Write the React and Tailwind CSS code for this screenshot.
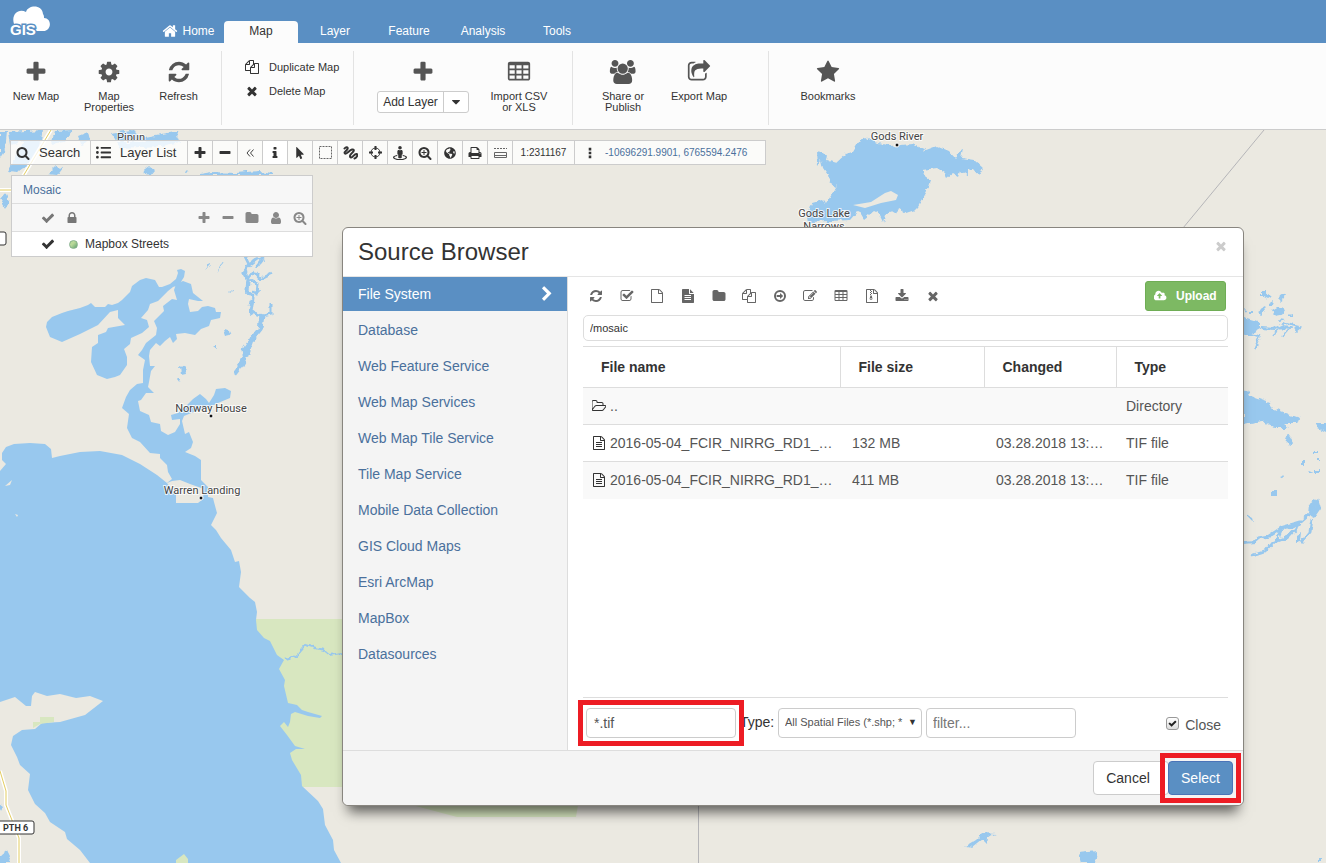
import { FaGlobeAmericas, FaMousePointer, FaStreetView, FaListUl } from "react-icons/fa";

// Icon outlines, drawn on a 1792 unit grid
const ICONS = {
  plus: "M1600 736v192q0 40-28 68t-68 28h-416v416q0 40-28 68t-68 28h-192q-40 0-68-28t-28-68v-416h-416q-40 0-68-28t-28-68v-192q0-40 28-68t68-28h416v-416q0-40 28-68t68-28h192q40 0 68 28t28 68v416h416q40 0 68 28t28 68z",
  minus: "M1600 736v192q0 40-28 68t-68 28h-1216q-40 0-68-28t-28-68v-192q0-40 28-68t68-28h1216q40 0 68 28t28 68z",
  cog: "M1152 896q0-106-75-181t-181-75-181 75-75 181 75 181 181 75 181-75 75-181zm512-109v222q0 12-8 23t-20 13l-185 28q-19 54-39 91 35 50 107 138 10 12 10 25t-9 23q-27 37-99 108t-94 71q-12 0-26-9l-138-108q-44 23-91 38-16 136-29 186-7 28-36 28h-222q-14 0-24.5-8.5t-11.5-21.5l-28-184q-49-16-90-37l-141 107q-10 9-25 9-14 0-25-11-126-114-165-168-7-10-7-23 0-12 8-23 15-21 51-66.5t54-70.5q-27-50-41-99l-183-27q-13-2-21-12.5t-8-23.5v-222q0-12 8-23t19-13l186-28q14-46 39-92-40-57-107-138-10-12-10-24 0-10 9-23 26-36 98.5-107.5t94.5-71.5q13 0 26 10l138 107q44-23 91-38 16-136 29-186 7-28 36-28h222q14 0 24.5 8.5t11.5 21.5l28 184q49 16 90 37l142-107q9-9 24-9 13 0 25 10 129 119 165 170 7 8 7 22 0 12-8 23-15 21-51 66.5t-54 70.5q26 50 41 98l183 28q13 2 21 12.5t8 23.5z",
  refresh: "M1639 1056q0 5-1 7-64 268-268 434.5t-478 166.5q-146 0-282.5-55t-243.5-157l-129 129q-19 19-45 19t-45-19-19-45v-448q0-26 19-45t45-19h448q26 0 45 19t19 45-19 45l-137 137q71 66 161 102t187 36q134 0 250-65t186-179q11-17 53-117 8-23 30-23h192q13 0 22.5 9.5t9.5 22.5zm25-800v448q0 26-19 45t-45 19h-448q-26 0-45-19t-19-45 19-45l138-138q-148-137-349-137-134 0-250 65t-186 179q-11 17-53 117-8 23-30 23h-199q-13 0-22.5-9.5t-9.5-22.5v-7q65-268 270-434.5t480-166.5q146 0 284 55.5t245 156.5l130-129q19-19 45-19t45 19 19 45z",
  home: "M1472 992v480q0 26-19 45t-45 19h-384v-384h-256v384h-384q-26 0-45-19t-19-45v-480q0-1 .5-3t.5-3l575-474 575 474q1 2 1 6zm223-69l-62 74q-8 9-21 11h-3q-13 0-21-7l-692-577-692 577q-12 8-24 7-13-2-21-11l-62-74q-8-10-7-23.5t11-21.5l719-599q32-26 76-26t76 26l244 204v-195q0-14 9-23t23-9h192q14 0 23 9t9 23v408l219 182q10 8 11 21.5t-7 23.5z",
  times: "M1490 1322q0 40-28 68l-136 136q-28 28-68 28t-68-28l-294-294-294 294q-28 28-68 28t-68-28l-136-136q-28-28-28-68t28-68l294-294-294-294q-28-28-28-68t28-68l136-136q28-28 68-28t68 28l294 294 294-294q28-28 68-28t68 28l136 136q28 28 28 68t-28 68l-294 294 294 294q28 28 28 68z",
  copy: "M1696 384q40 0 68 28t28 68v1216q0 40-28 68t-68 28h-960q-40 0-68-28t-28-68v-288h-544q-40 0-68-28t-28-68v-672q0-40 20-88t48-76l408-408q28-28 76-48t88-20h416q40 0 68 28t28 68v328q68-40 128-40h416zm-544 213l-299 299h299v-299zm-640-384l-299 299h299v-299zm196 647l316-316v-416h-384v416q0 40-28 68t-68 28h-416v640h512v-256q0-40 20-88t48-76zm956 804v-1152h-384v416q0 40-28 68t-68 28h-416v640h896z",
  table: "M224 128h1344q66 0 113 47t47 113v1088q0 66-47 113t-113 47h-1344q-66 0-113-47t-47-113v-1088q0-66 47-113t113-47zM192 384v256h384v-256zM704 384v256h384v-256zM1216 384v256h384v-256zM192 768v256h384v-256zM704 768v256h384v-256zM1216 768v256h384v-256zM192 1152v256h384v-256zM704 1152v256h384v-256zM1216 1152v256h384v-256z",
  users: "M657 896q-162 5-265 128h-134q-82 0-138-40.5t-56-118.5q0-353 124-353 6 0 43.5 21t97.5 42.5 119 21.5q67 0 133-23-5 37-5 66 0 139 81 256zm1071 637q0 120-73 189.5t-194 69.5h-874q-121 0-194-69.5t-73-189.5q0-53 3.5-103.5t14-109 26.5-108.5 43-97.5 62-81 85.5-53.5 111.5-20q10 0 43 21.5t73 48 107 48 135 21.5 135-21.5 107-48 73-48 43-21.5q61 0 111.5 20t85.5 53.5 62 81 43 97.5 26.5 108.5 14 109 3.5 103.5zm-1024-1277q0 106-75 181t-181 75-181-75-75-181 75-181 181-75 181 75 75 181zm704 384q0 159-112.5 271.5t-271.5 112.5-271.5-112.5-112.5-271.5 112.5-271.5 271.5-112.5 271.5 112.5 112.5 271.5zm576 225q0 78-56 118.5t-138 40.5h-134q-103-123-265-128 81-117 81-256 0-29-5-66 66 23 133 23 59 0 119-21.5t97.5-42.5 43.5-21q124 0 124 353zm-128-609q0 106-75 181t-181 75-181-75-75-181 75-181 181-75 181 75 75 181z",
  share: "M1472 989v259q0 119-84.5 203.5t-203.5 84.5h-832q-119 0-203.5-84.5t-84.5-203.5v-832q0-119 84.5-203.5t203.5-84.5h255q13 0 22.5 9.5t9.5 22.5q0 27-26 32-77 26-133 60-10 4-16 4h-112q-66 0-113 47t-47 113v832q0 66 47 113t113 47h832q66 0 113-47t47-113v-214q0-19 18-29 28-13 54-37 16-16 35-8 21 9 21 29zm237-496l-384 384q-18 19-45 19-12 0-25-5-39-17-39-59v-192h-160q-323 0-438 131-119 137-74 473 3 23-20 34-8 2-12 2-16 0-26-13-10-14-21-31t-39.5-68.5-49.5-99.5-38.5-114-17.5-122q0-49 3.5-91t14-90 28-88 47-81.5 68.5-74 94.5-61.5 124.5-48.5 159.5-30.5 196.5-11h160v-192q0-42 39-59 13-5 25-5 26 0 45 19l384 384q19 19 19 45t-19 45z",
  star: "M1728 647q0 22-26 48l-363 354 86 500q1 7 1 20 0 21-10.5 35.5t-30.5 14.5q-19 0-40-12l-449-236-449 236q-22 12-40 12-21 0-31.5-14.5t-10.5-35.5q0-6 2-20l86-500-364-354q-25-27-25-48 0-37 56-46l502-73 225-455q19-41 49-41t49 41l225 455 502 73q56 9 56 46z",
  search: "M1216 832q0-185-131.5-316.5t-316.5-131.5-316.5 131.5-131.5 316.5 131.5 316.5 316.5 131.5 316.5-131.5 131.5-316.5zm512 832q0 52-38 90t-90 38q-54 0-90-38l-343-342q-179 124-399 124-143 0-273.5-55.5t-225-150-150-225-55.5-273.5 55.5-273.5 150-225 225-150 273.5-55.5 273.5 55.5 225 150 150 225 55.5 273.5q0 220-124 399l343 343q37 37 37 90z",
  zoomIn: "M1088 800v64q0 13-9.5 22.5t-22.5 9.5h-224v224q0 13-9.5 22.5t-22.5 9.5h-64q-13 0-22.5-9.5t-9.5-22.5v-224h-224q-13 0-22.5-9.5t-9.5-22.5v-64q0-13 9.5-22.5t22.5-9.5h224v-224q0-13 9.5-22.5t22.5-9.5h64q13 0 22.5 9.5t9.5 22.5v224h224q13 0 22.5 9.5t9.5 22.5zm128 32q0-185-131.5-316.5t-316.5-131.5-316.5 131.5-131.5 316.5 131.5 316.5 316.5 131.5 316.5-131.5 131.5-316.5zm512 832q0 53-37.5 90.5t-90.5 37.5q-54 0-90-38l-343-342q-179 124-399 124-143 0-273.5-55.5t-225-150-150-225-55.5-273.5 55.5-273.5 150-225 225-150 273.5-55.5 273.5 55.5 225 150 150 225 55.5 273.5q0 220-124 399l343 343q37 37 37 90z",
  check: "M1671 566q0 40-28 68l-724 724-136 136q-28 28-68 28t-68-28l-136-136-362-362q-28-28-28-68t28-68l136-136q28-28 68-28t68 28l294 295 656-657q28-28 68-28t68 28l136 136q28 28 28 68z",
  lock: "M640 768h512v-192q0-106-75-181t-181-75-181 75-75 181v192zm832 96v576q0 40-28 68t-68 28h-960q-40 0-68-28t-28-68v-576q0-40 28-68t68-28h32v-192q0-184 132-316t316-132 316 132 132 316v192h32q40 0 68 28t28 68z",
  folder: "M1728 608v704q0 92-66 158t-158 66h-1216q-92 0-158-66t-66-158v-960q0-92 66-158t158-66h320q92 0 158 66t66 158v32h672q92 0 158 66t66 158z",
  folderOpen: "M1717 931q0-35-53-35h-1088q-40 0-85.5 21.5t-71.5 52.5l-294 363q-18 24-18 40 0 35 53 35h1088q40 0 86-22t71-53l294-363q18-22 18-39zm-1141-163h768v-160q0-40-28-68t-68-28h-576q-40 0-68-28t-28-68v-64q0-40-28-68t-68-28h-320q-40 0-68 28t-28 68v853l256-315q44-53 116-87.5t140-34.5zm1269 163q0 62-46 120l-295 363q-43 53-116 87.5t-140 34.5h-1088q-92 0-158-66t-66-158v-960q0-92 66-158t158-66h320q92 0 158 66t66 158v32h544q92 0 158 66t66 158v160h192q54 0 99 24.5t67 70.5q15 32 15 68z",
  user: "M1536 1399q0 109-62.5 187t-150.5 78h-854q-88 0-150.5-78t-62.5-187q0-85 8.5-160.5t31.5-152 58.5-131 94-89 134.5-34.5q131 128 313 128t313-128q76 0 134.5 34.5t94 89 58.5 131 31.5 152 8.5 160.5zm-256-887q0 159-112.5 271.5t-271.5 112.5-271.5-112.5-112.5-271.5 112.5-271.5 271.5-112.5 271.5 112.5 112.5 271.5z",
  file: "M1596 380q28 28 48 76t20 88v1152q0 40-28 68t-68 28h-1344q-40 0-68-28t-28-68v-1600q0-40 28-68t68-28h896q40 0 88 20t76 48zm-444-244v376h376q-10-29-22-41l-313-313q-12-12-41-22zm384 1528v-1024h-416q-40 0-68-28t-28-68v-416h-768v1536h1280z",
  fileText: "M1596 476q14 14 28 36h-472v-472q22 14 36 28zm-476 164h544v1056q0 40-28 68t-68 28h-1344q-40 0-68-28t-28-68v-1600q0-40 28-68t68-28h800v544q0 40 28 68t68 28zM448 768v128h832v-128zM448 1024v128h832v-128zM448 1280v128h832v-128z",
  fileLines: "M1596 380q28 28 48 76t20 88v1152q0 40-28 68t-68 28h-1344q-40 0-68-28t-28-68v-1600q0-40 28-68t68-28h896q40 0 88 20t76 48zm-444-244v376h376q-10-29-22-41l-313-313q-12-12-41-22zm384 1528v-1024h-416q-40 0-68-28t-28-68v-416h-768v1536h1280zM512 768h768v128h-768zM512 1024h768v128h-768zM512 1280h768v128h-768z",
  fileZip: "M1596 380q28 28 48 76t20 88v1152q0 40-28 68t-68 28h-1344q-40 0-68-28t-28-68v-1600q0-40 28-68t68-28h896q40 0 88 20t76 48zm-444-244v376h376q-10-29-22-41l-313-313q-12-12-41-22zm384 1528v-1024h-416q-40 0-68-28t-28-68v-416h-768v1536h1280zM640 128h128v128h-128zM768 256h128v128h-128zM640 384h128v128h-128zM768 512h128v128h-128zM640 640h128v128h-128zM700 820h150l100 380q10 190-180 190t-180-190zM770 1150q-90 0-90 64t90 64 90-64-90-64z",
  edit: "M888 1184l116-116-152-152-116 116v56h96v96h56zm440-720q-16-16-33 1l-350 350q-17 17-1 33t33-1l350-350q17-17 1-33zm80 594v190q0 119-84.5 203.5t-203.5 84.5h-832q-119 0-203.5-84.5t-84.5-203.5v-832q0-119 84.5-203.5t203.5-84.5h832q63 0 117 25 15 7 18 23 3 17-9 29l-49 49q-14 14-32 8-23-6-45-6h-832q-66 0-113 47t-47 113v832q0 66 47 113t113 47h832q66 0 113-47t47-113v-126q0-13 9-22l64-64q15-15 35-7t20 29zm-96-738l288 288-672 672h-288v-288zm444 132l-92 92-288-288 92-92q28-28 68-28t68 28l152 152q28 28 28 68t-28 68z",
  checkSquare: "M1472 930v318q0 119-84.5 203.5t-203.5 84.5h-832q-119 0-203.5-84.5t-84.5-203.5v-832q0-119 84.5-203.5t203.5-84.5h832q63 0 117 25 15 7 18 23 3 17-9 29l-49 49q-10 10-23 10-3 0-9-2-23-6-45-6h-832q-66 0-113 47t-47 113v832q0 66 47 113t113 47h832q66 0 113-47t47-113v-254q0-13 9-22l64-64q10-10 23-10 6 0 12 3 20 8 20 29zm231-489l-814 814q-24 24-57 24t-57-24l-430-430q-24-24-24-57t24-57l110-110q24-24 57-24t57 24l263 263 647-647q24-24 57-24t57 24l110 110q24 24 24 57t-24 57z",
  arrowRight: "M896 128a768 768 0 1 1 0 1536 768 768 0 0 1 0-1536zm0 250a518 518 0 1 0 0 1036 518 518 0 0 0 0-1036zM900 500l400 396-400 396v-256h-430v-280h430z",
  download: "M1344 1344q0-26-19-45t-45-19-45 19-19 45 19 45 45 19 45-19 19-45zm256 0q0-26-19-45t-45-19-45 19-19 45 19 45 45 19 45-19 19-45zm128-224v320q0 40-28 68t-68 28h-1472q-40 0-68-28t-28-68v-320q0-40 28-68t68-28h465l135 136q58 56 136 56t136-56l136-136h464q40 0 68 28t28 68zm-325-569q17 41-14 70l-448 448q-18 19-45 19t-45-19l-448-448q-31-29-14-70 17-39 59-39h256v-448q0-26 19-45t45-19h256q26 0 45 19t19 45v448h256q42 0 59 39z",
  print: "M448 1536h896v-256h-896v256zm0-640h896v-384h-160q-40 0-68-28t-28-68v-160h-640v640zm1152 64q0-26-19-45t-45-19-45 19-19 45 19 45 45 19 45-19 19-45zm128 0v416q0 13-9.5 22.5t-22.5 9.5h-224v160q0 40-28 68t-68 28h-960q-40 0-68-28t-28-68v-160h-224q-13 0-22.5-9.5t-9.5-22.5v-416q0-79 56.5-135.5t135.5-56.5h64v-544q0-40 28-68t68-28h672q40 0 88 20t76 48l152 152q28 28 48 76t20 88v256h64q79 0 135.5 56.5t56.5 135.5z",
  chevron: "M1363 877l-742 742q-19 19-45 19t-45-19l-166-166q-19-19-19-45t19-45l531-531-531-531q-19-19-19-45t19-45l166-166q19-19 45-19t45 19l742 742q19 19 19 45t-19 45z",
  cloudUp: "M1216 864q0-14-9-23l-352-352q-9-9-23-9t-23 9l-351 351q-10 12-10 24 0 14 9 23t23 9h224v352q0 13 9.5 22.5t22.5 9.5h192q13 0 22.5-9.5t9.5-22.5v-352h224q13 0 22.5-9.5t9.5-22.5zm640 288q0 159-112.5 271.5t-271.5 112.5h-1088q-185 0-316.5-131.5t-131.5-316.5q0-130 70-240t188-165q-2-30-2-43 0-212 150-362t362-150q156 0 285.5 87t188.5 231q71-62 166-62 106 0 181 75t75 181q0 76-41 138 130 31 213.5 135.5t83.5 238.5z",
  info: "M1216 1344v128q0 26-19 45t-45 19h-512q-26 0-45-19t-19-45v-128q0-26 19-45t45-19h64v-384h-64q-26 0-45-19t-19-45v-128q0-26 19-45t45-19h384q26 0 45 19t19 45v576h64q26 0 45 19t19 45zm-128-1152v192q0 26-19 45t-45 19h-256q-26 0-45-19t-19-45v-192q0-26 19-45t45-19h256q26 0 45 19t19 45z",
  dots: "M704 128h384v384h-384zM704 704h384v384h-384zM704 1280h384v384h-384z",
  caret: "M1408 704q0 26-19 45l-448 448q-19 19-45 19t-45-19l-448-448q-19-19-19-45t19-45 45-19h896q26 0 45 19t19 45z",
};

function Icon({ name, className, wide }) {
  return (
    <svg viewBox={wide ? "0 0 2048 1792" : "0 0 1792 1792"} className={`w-auto shrink-0 fill-current ${className}`} fillRule="evenodd" aria-hidden="true">
      <path d={ICONS[name]} />
    </svg>
  );
}

function Logo() {
  return (
    <svg viewBox="0 0 44 32" className="h-8 w-11" aria-label="GIS Cloud">
      <path fill="#fff" d="M6 18C3 9 10 2 18 6 20-1 34-2 35 8c1 1 1 3 1 4 8 0 8 13-1 13H12c-4 0-6-3-6-7z" />
      <text x="2" y="29" fontSize="15" fontWeight="bold" fontFamily="Liberation Sans, sans-serif" fill="#fff" stroke="#5a8fc3" strokeWidth="3" paintOrder="stroke">GIS</text>
    </svg>
  );
}

function TopBar() {
  return (
    <header className="flex h-[43px] items-end bg-[#5a8fc3] text-xs text-white">
      <div className="w-[153px] self-start pl-2 pt-[6px]">
        <Logo />
      </div>
      <nav className="flex h-[22px]">
        <a href="#home" className="flex w-[71px] justify-center gap-1 pt-[2px]">
          <Icon name="home" className="h-4" />
          <span>Home</span>
        </a>
        <a href="#map" className="w-[74px] rounded-t-[4px] bg-[#fcfcfc] pt-[2px] text-center text-[#333]">Map</a>
        {["Layer", "Feature", "Analysis", "Tools"].map((t) => (
          <a key={t} href={`#${t}`} className="w-[74px] pt-[2px] text-center">{t}</a>
        ))}
      </nav>
    </header>
  );
}

function RibbonItem({ icon, label, className, wide }) {
  return (
    <button className={`flex flex-col items-center gap-[7px] pt-[9px] text-[11px] leading-[11px] ${className}`}>
      <Icon name={icon} wide={wide} className="h-6 text-[#555]" />
      <span className="whitespace-pre">{label}</span>
    </button>
  );
}

function Ribbon() {
  return (
    <div className="flex h-[87px] border-b border-[#ccc] bg-[#fcfcfc] pt-2 pb-1 text-[#333]">
      <div className="flex w-[222px] items-start border-r border-[#e3e3e3]">
        <RibbonItem icon="plus" label="New Map" className="w-[72px]" />
        <RibbonItem icon="cog" label={"Map\nProperties"} className="w-[74px]" />
        <RibbonItem icon="refresh" label="Refresh" className="w-[65px]" />
      </div>
      <div className="flex w-[132px] flex-col gap-2 border-r border-[#e3e3e3] pl-[22px] pt-2 text-[11px]">
        <button className="flex h-4 items-center gap-[9px]">
          <Icon name="copy" className="h-[14px] px-px" />
          Duplicate Map
        </button>
        <button className="flex h-4 items-center gap-[9px]">
          <Icon name="times" className="h-[14px] px-px" />
          Delete Map
        </button>
      </div>
      <div className="flex w-[219px] items-start border-r border-[#e3e3e3] pl-[23px]">
        <div className="flex w-[92px] flex-col items-center gap-[7px] pt-[9px]">
          <Icon name="plus" className="h-6 text-[#555]" />
          <div className="flex h-[22px] w-full rounded-[3px] border border-[#ccc] bg-white text-xs">
            <button className="flex-1 border-r border-[#ccc]">Add Layer</button>
            <button className="flex w-6 items-center justify-center" aria-label="More layer types">
              <Icon name="caret" className="h-[14px]" />
            </button>
          </div>
        </div>
        <RibbonItem icon="table" label={"Import CSV\nor XLS"} className="w-[100px]" />
      </div>
      <div className="flex w-[196px] items-start border-r border-[#e3e3e3] pl-[10px]">
        <RibbonItem icon="users" wide label={"Share or\nPublish"} className="w-20" />
        <RibbonItem icon="share" label="Export Map" className="w-[72px]" />
      </div>
      <div className="flex items-start pl-5">
        <RibbonItem icon="star" label="Bookmarks" className="w-[78px]" />
      </div>
    </div>
  );
}

function MapLabel({ x, y, children, dot }) {
  return (
    <g>
      <text x={x} y={y} textAnchor="middle" fontSize="11" fontFamily="Roboto, sans-serif" fill="#444" stroke="#fff" strokeWidth="2" strokeOpacity=".8" paintOrder="stroke">{children}</text>
      {dot && <circle cx={dot[0]} cy={dot[1]} r="2" fill="#111" stroke="#fff" />}
    </g>
  );
}

function MapCanvas() {
  return (
    <svg viewBox="0 130 1326 733" preserveAspectRatio="xMinYMin slice" className="absolute inset-0 size-full">
      <defs>
        {/* roughens the shorelines of the small lakes and rivers */}
        <filter id="shore" filterUnits="userSpaceOnUse" x="-10" y="120" width="1346" height="753">
          <feTurbulence type="fractalNoise" baseFrequency="0.16" numOctaves="2" seed="4" />
          <feDisplacementMap in="SourceGraphic" scale="6" xChannelSelector="R" yChannelSelector="G" />
        </filter>
      </defs>
      <rect y="130" width="1326" height="733" fill="#ebe9e1" />
      {/* parks */}
      <g fill="#d8e7c0">
        <path d="M254 619H345V787H302L250 740z" />
        <path d="M412 805l45 12h119l2-12z" />
      </g>
      {/* Lake Winnipeg and its outflow */}
      <path fill="#98c8ee" d="M0 471L6 464 2 460 2 453 6 447 14 444 30 443 45 444 51 449 52 458 60 456 80 452 100 451 122 455 140 464 157 475 167 483 172 479 168 472 167 465 160 458 160 454 150 453 140 442 132 438 127 428 129 414 122 408 126 397 130 390 137 384 143 383 143 370 145 360 138 355 142 350 146 343 156 335 157 328 154 321 164 311 163 306 172 299 177 300 174 290 176 284 183 281 191 284 193 293 203 301 198 301 189 299 188 304 190 312 198 311 202 307 208 306 215 308 216 312 221 312 220 318 211 320 209 326 201 329 195 335 185 333 176 334 177 339 173 343 170 337 165 341 160 346 156 343 150 350 149 356 150 366 155 366 151 371 149 382 148 387 154 393 146 393 141 400 138 401 140 411 149 415 151 422 160 424 161 431 168 435 175 432 180 424 180 419 172 420 171 415 178 413 187 405 193 399 200 394 206 399 209 403 214 395 216 389 225 388 231 391 230 398 218 403 208 408 196 411 184 416 182 421 185 434 189 432 193 442 191 448 185 452 195 456 201 460 201 480 208 487 208 497 213 498 214 502 217 513 211 525 216 530 221 538 231 550 233 556 235 562 239 561 241 572 239 587 250 598 255 602 257 612 256 620 257 630 264 638 270 641 277 655 284 660 279 669 285 680 284 686 288 703 297 705 302 710 308 712 322 716 320 718 308 716 295 712 291 714 290 722 288 727 284 722 280 726 287 735 295 746 305 749 296 749 290 753 292 760 301 775 302 786 318 801 323 809 325 825 333 840 334 850 341 863H90L80 850 67 839 65 832 50 822 45 813 35 804 28 790 30 774 20 765 17 757 11 745 13 736 22 730 35 729 42 723 60 722 85 715 94 708 103 701 90 696 76 698 60 694 47 696 35 692 32 696 31 706 26 706 15 697 0 702z" />
      <path fill="#98c8ee" d="M46 327L47 322 52 317 62 313 68 311 80 308 88 305 91 303 95 307 105 307 108 304 112 305 118 303 122 300 130 292 132 286 140 280 146 278 155 280 159 287 162 287 170 284 176 279 178 273 177 270 181 269 185 271 184 277 179 285 173 287 168 291 158 301 150 304 148 310 141 318 147 320 149 327 142 333 131 338 130 344 124 349 127 357 127 365 120 375 115 377 107 379 97 375 91 362 92 347 98 343 98 335 106 332 108 328 125 325 118 318 118 310 110 312 98 325 80 334 62 342 50 337z" />
      <g fill="#98c8ee" filter="url(#shore)">
        <path d="M816 152L827 154 826 160 836 163 846 154 852 152 858 142 866 137 875 142 890 146 912 144 926 150 937 146 949 151 955 158 963 148 961 158 974 160 983 168 979 175 974 169 968 170 968 176 961 171 959 177 952 173 947 177 945 173 937 168 922 170 922 173 931 180 928 189 926 193 918 207 915 210 903 214 901 208 894 212 885 215 883 222 879 214 876 212 874 211 864 219 861 214 857 212 850 220 809 222 808 216 812 203 823 200 826 204 837 187 830 183 828 175 823 168 821 160 817 165z" />
        <path d="M1243 389l5 1 2 5 20 7 2 6 13 5 15 5-2 6h-15l6 4h-14l-13-7-19 3zM1315 423h11v9l-8-4zM1243 317l18 5v6l-11 6-7 1zM1272 311l7-4 5 3-3 5-6 1zM1257 310l7-4 1 5-6 4zM1263 297l5-3 4 2-5 3zM1280 296l5-3-1 5-5 4zM1269 303l5-3-1 5-4 1zM1296 326l6 2-5 4-4-3zM1289 315l3-1v3h-3zM1262 292h4v4h-4zM1278 319l6 1-4 2zM1249 312h4v3h-4zM1244 309l3 1-1 3zM1285 437l3-2 5 8-4 2zM1287 436l3 2v3zM1301 461h3v4h-3zM1309 504l9-6 3 10-7 10-6-3zM1296 535l5-3-1 10-4 1zM1247 514l5 3 1 3-6-3zM1314 451h4v2h-4zM1306 473l7-2-3 4zM1317 457h3v3h-3zM1314 469h5v3h-5zM1280 476l5-2-2 4zM1272 491h4v5h-4zM1318 858h4v4h-4z" />
        <path d="M966 846l10-6 7-7 14 1-9 3-1 7-5-5-10 8zM1078 853l20-2-2 12h-15zM0 805l4 3-2 4zM0 855l8-6 3 6-2 8H0z" />
        <path d="M0 131h7l-2 18-5 8zM9 132l34-2-3 16-8 16-14 10-10-1 8-14 8-16-13 4zM55 131l18-1-9 12-13 2zM78 136l10-4 2 8-9 4zM111 133l20-3 14 8 32-6 4 10-20 4-40 2zM47 174l8-8 8 1-6 8zM142 173l8-6 4 3-5 6zM186 174l1-4 3 3zM200 174l12-2 24 1 24-2 12 2v2h-72zM0 199l5-6 4 8-3 8zM180 366l5 2 1 5-5 1zM176 378h4l-1 4zM224 330l6 1 1 4-5 1zM213 346h4v3zM205 271l4-7 2 1zM217 272l5-9 2 1zM229 293l3-3 1 2z" />
      </g>
      {/* rivers */}
      <g fill="none" stroke="#98c8ee" filter="url(#shore)">
        <path strokeWidth="3" d="M245 257l4 8-6 8 4 7 7-9 6 8 12-6M249 265l8-6 6-2M247 280l-1 10 7 8-2 14 12 4 8-2v-10M256 268l7-9" />
        <path strokeWidth="5" d="M262 315l-2 14-8 10-5 14-6 12-7 9M246 358l-2-8 4-6" />
        <path strokeWidth="3" d="M249 276l-2 14 6 8M250 280l8 4-1 10-5-2M252 300l-2 13" />
        <path strokeWidth="2" d="M284 660l8-2 8-6 6-7 10 3 7 2 6 5 14-2M1261 328l14 1 12-6 12 3M1248 334l12 2-6 14M1272 335l10-8 8 1-8 9M1243 543l12-1 6-5" />
        <path strokeWidth="3" d="M1257 538l12-2 14-9 18-5 10-9 4-8M1252 556l12-4 8-9 16-6 8-9 4-6M1283 526l-6 15M1302 542l8-10 2-13M1288 528l12-6" />
      </g>
      <path fill="#ebe9e1" d="M172 481l8-1 10 4 14 5-1 10-5 4h-22v-8l-9-12zM853 205l18-3 14-9 6-2 7 4-2 5-15 3-16 5zM5 486l7-6-2 5zM15 514l3 1-1 2z" />
      <path fill="#d8e7c0" d="M33 728v-6h7v-5h14v5l-14 2zM176 863v-3l8-6 4 5v4z" />
      {/* roads */}
      <g fill="none">
        <path stroke="#fff" strokeWidth="4" d="M51 130L22 178M0 190h12M0 771l6 20v14l13 33v25" />
        <path stroke="#e3cd62" strokeWidth="1" d="M51 130L22 178M0 190h12M0 771l6 20v14l13 33v25" />
        <path stroke="#b5b5b8" d="M1264 130l-81 98M698.500 805v58" />
      </g>
      <MapLabel x={131} y={141}>Pipun</MapLabel>
      <MapLabel x={897} y={140} dot={[897, 145]}>Gods River</MapLabel>
      <MapLabel x={824} y={217}>Gods Lake</MapLabel>
      <MapLabel x={824} y={230}>Narrows</MapLabel>
      <MapLabel x={211} y={412} dot={[211, 416]}>Norway House</MapLabel>
      <MapLabel x={202} y={494} dot={[201, 498]}>Warren Landing</MapLabel>
      <g fill="#fff" stroke="#333">
        <rect x="-10" y="232" width="16" height="13" rx="2" />
        <rect x="-5" y="821" width="39" height="13" rx="2" />
      </g>
      <text x="3" y="831" fontSize="9" fontWeight="bold" fontFamily="Roboto, sans-serif" fill="#333">PTH 6</text>
    </svg>
  );
}

function ToolCell({ label, children, className = "w-[25px] justify-center" }) {
  return (
    <button aria-label={label} className={`flex items-center border-r border-[#ccc] ${className}`}>
      {children}
    </button>
  );
}

function MapToolbar() {
  return (
    <div className="absolute left-[10px] top-[10px] flex h-[25px] border border-[#ccc] bg-white/80 text-[13px] text-[#333]">
      <ToolCell label="Search" className="w-[80px] gap-[9px] pl-[5px]">
        <Icon name="search" className="h-[14px]" />
        <span>Search</span>
      </ToolCell>
      <ToolCell label="Layer List" className="w-[97px] gap-[9px] pl-[5px]">
        <FaListUl size={15} />
        <span>Layer List</span>
      </ToolCell>
      <ToolCell label="Zoom in"><Icon name="plus" className="h-[14px]" /></ToolCell>
      <ToolCell label="Zoom out"><Icon name="minus" className="h-[14px]" /></ToolCell>
      <ToolCell label="Previous view">
        <svg viewBox="0 0 8 8" className="h-2 w-2 fill-none stroke-[#444]"><path d="M4 0.500l-3 3.500 3 3.500M7.500 0.500l-3 3.500 3 3.500" /></svg>
      </ToolCell>
      <ToolCell label="Info" className="w-[25px] justify-center bg-white"><Icon name="info" className="h-[14px]" /></ToolCell>
      <ToolCell label="Select"><FaMousePointer size={12} /></ToolCell>
      <ToolCell label="Select area">
        <svg viewBox="0 0 13 13" className="h-[13px] w-[13px] fill-none stroke-[#666]"><rect x=".5" y=".5" width="12" height="12" strokeDasharray="2 1" /></svg>
      </ToolCell>
      <ToolCell label="Measure">
        <svg viewBox="0 0 15 14" className="h-[14px] w-[15px] fill-none stroke-[#333]" strokeWidth="2" strokeLinecap="round"><path d="M1.500 2.500c1.500-2 4-1.500 3 .500S.500 6 2 7.500s4.500-3.500 7-4 2.500 1.500 0 3.500-2.500 4-1 4.500 3.500-4 5.500-3.500 0 4-2 4.500" /></svg>
      </ToolCell>
      <ToolCell label="Locate">
        <svg viewBox="0 0 13 13" className="h-[13px] w-[13px] fill-none stroke-[#333]"><circle cx="6.5" cy="6.5" r="4.500" /><path strokeWidth="2" d="M6.5 0v4M6.5 9v4M0 6.5h4M9 6.5h4" /></svg>
      </ToolCell>
      <ToolCell label="Street view"><FaStreetView size={14} /></ToolCell>
      <ToolCell label="Zoom area"><Icon name="zoomIn" className="h-[14px]" /></ToolCell>
      <ToolCell label="Globe"><FaGlobeAmericas size={12} /></ToolCell>
      <ToolCell label="Print"><Icon name="print" className="h-[14px]" /></ToolCell>
      <ToolCell label="Scale bar">
        <svg viewBox="0 0 13 12" className="h-[12px] w-[13px] fill-none stroke-[#666]"><path strokeDasharray="2 1" d="M0 1.500h13" /><path d="M.500 5.500h12v5H.500zM.500 8.500h12" /></svg>
      </ToolCell>
      <div className="flex w-[62px] items-center justify-center border-r border-[#ccc] text-[10px]">1:2311167</div>
      <div className="flex w-[190px] items-center gap-[9px] pl-[9px] text-[10px] text-[#4a709c]">
        <Icon name="dots" className="h-3 text-[#333]" />
        -10696291.9901, 6765594.2476
      </div>
    </div>
  );
}

function LayerPanel() {
  return (
    <section className="absolute left-[11px] top-[45px] w-[302px] border border-[#ccc] bg-white text-xs text-[#333]">
      <h2 className="h-7 border-b border-[#ddd] bg-[#f7f7f7] pl-[11px] leading-[28px] text-[#4a709c]">Mosaic</h2>
      <div className="flex h-7 items-center border-b border-[#ddd] bg-[#f7f7f7] pl-[29px] pr-[5px] text-[#777]">
        <Icon name="check" className="mr-[10px] h-[14px]" />
        <Icon name="lock" className="h-[14px]" />
        <div className="ml-auto flex items-center gap-[10px] text-[#888]">
          <Icon name="plus" className="h-[14px]" />
          <Icon name="minus" className="h-[14px]" />
          <Icon name="folder" className="h-[14px]" />
          <Icon name="user" className="h-[14px]" />
          <Icon name="zoomIn" className="h-[14px]" />
        </div>
      </div>
      <div className="flex h-6 items-center pl-[29px]">
        <Icon name="check" className="mr-[14px] h-[14px]" />
        <span className="mr-[7px] size-[9px] rounded-full border border-[#85b08b] bg-linear-to-br from-[#b9d99a] from-40% to-[#5da06f]" />
        Mapbox Streets
      </div>
    </section>
  );
}

const SOURCES = [
  "Database",
  "Web Feature Service",
  "Web Map Services",
  "Web Map Tile Service",
  "Tile Map Service",
  "Mobile Data Collection",
  "GIS Cloud Maps",
  "Esri ArcMap",
  "MapBox",
  "Datasources",
];

const FILE_TOOLS = ["refresh", "checkSquare", "file", "fileText", "folder", "copy", "arrowRight", "edit", "table", "fileZip", "download", "times"];

const FILES = [
  { icon: "folderOpen", name: "..", size: "", changed: "", type: "Directory" },
  { icon: "fileLines", name: "2016-05-04_FCIR_NIRRG_RD1_…", size: "132 MB", changed: "03.28.2018 13:…", type: "TIF file" },
  { icon: "fileLines", name: "2016-05-04_FCIR_NIRRG_RD1_…", size: "411 MB", changed: "03.28.2018 13:…", type: "TIF file" },
];

function Highlight() {
  return <span className="pointer-events-none absolute -inset-2 z-10 border-[5px] border-[#ed1c24]" />;
}

function FileTable() {
  return (
    <table className="w-full table-fixed border-t border-[#ddd] text-left text-sm text-[#555]">
      <thead className="text-[#333]">
        <tr className="h-[41px] border-b border-[#ddd]">
          <th className="w-[257px] border-r border-[#ddd] pl-[18px]">File name</th>
          <th className="w-[144px] border-r border-[#ddd] pl-[18px]">File size</th>
          <th className="w-[132px] border-r border-[#ddd] pl-[18px]">Changed</th>
          <th className="pl-[18px]">Type</th>
        </tr>
      </thead>
      <tbody>
        {FILES.map((f, i) => (
          <tr key={i} className="h-[37px] border-b border-[#ddd] odd:bg-[#f9f9f9] last:border-0">
            <td className="pl-[9px]">
              <div className="flex items-center gap-1">
                <Icon name={f.icon} className="h-[14px] text-[#333]" />
                <span className="whitespace-nowrap">{f.name}</span>
              </div>
            </td>
            <td className="pl-3">{f.size}</td>
            <td className="whitespace-nowrap pl-3">{f.changed}</td>
            <td className="pl-[10px]">{f.type}</td>
          </tr>
        ))}
      </tbody>
    </table>
  );
}

function SourceBrowser() {
  return (
    <section role="dialog" aria-label="Source Browser" className="absolute left-[342px] top-[97px] w-[902px] rounded-md border border-[#88857f] bg-white text-sm text-[#333] shadow-[0_12px_12px_-6px_rgba(0,0,0,0.6)]">
      <div className="flex h-[49px] items-center justify-between border-b border-[#e5e5e5] px-[15px]">
        <h1 className="text-2xl">Source Browser</h1>
        <button aria-label="Close" className="pb-3 text-[#ccc]">
          <Icon name="times" className="h-[14px]" />
        </button>
      </div>

      <div className="flex min-h-[473px]">
        <nav className="flex w-[225px] flex-col gap-[2px] border-r border-[#ddd] bg-[#f4f4f4] text-[#4a709c]">
          <a href="#file-system" className="flex h-[34px] items-center justify-between bg-[#5a8fc3] pl-[15px] pr-3 text-white">
            File System
            <Icon name="chevron" className="h-4" />
          </a>
          {SOURCES.map((s) => (
            <a key={s} href={`#${s}`} className="flex h-[34px] items-center pl-[15px]">{s}</a>
          ))}
        </nav>

        <div className="flex min-w-0 flex-1 flex-col px-[15px] pt-1">
          <div className="flex h-[30px] items-center justify-between">
            <div className="flex w-[363px] justify-between text-[#666]">
              {FILE_TOOLS.map((t) => (
                <button key={t} aria-label={t} className="flex w-[26px] justify-center">
                  <Icon name={t} className="h-[14px]" />
                </button>
              ))}
            </div>
            <button className="mr-[2px] flex h-[30px] w-[81px] items-center justify-center gap-2 rounded-[3px] border border-[#6fad55] bg-[#7db963] text-xs font-bold text-white">
              <Icon name="cloudUp" wide className="h-[12px]" />
              Upload
            </button>
          </div>
          <input aria-label="Path" defaultValue="/mosaic" className="mt-1 mb-[5px] h-[26px] w-full rounded-[5px] border border-[#ddd] px-[6px] text-[11px] text-[#333]" />
          <FileTable />

          <div className="mt-auto flex h-[53px] items-start border-t border-[#ddd] pt-[10px] text-[#555]">
            <div className="relative ml-[3px]">
              <input aria-label="File name" defaultValue="*.tif" className="block h-[30px] w-[150px] rounded-[4px] border border-[#ccc] px-[7px]" />
              <Highlight />
            </div>
            <label htmlFor="type" className="w-[42px] pl-1 pt-1 text-[#333]">Type:</label>
            <div className="relative">
              <select id="type" className="block h-[30px] w-[144px] appearance-none rounded-[4px] border border-[#ccc] bg-white pl-[6px] pr-[18px] text-[11px]">
                <option>All Spatial Files (*.shp; *.tif)</option>
              </select>
              <span className="pointer-events-none absolute right-[5px] top-[7px] text-[9px] leading-[14px] text-[#333]">▼</span>
            </div>
            <input aria-label="Filter" placeholder="filter..." className="ml-1 h-[30px] w-[150px] rounded-[4px] border border-[#ccc] px-[6px] placeholder:text-[#777]" />
            <label className="ml-auto mr-[7px] flex gap-[6px] pt-[7px]">
              <span className="relative h-[13px] pt-[2px]">
                <input type="checkbox" defaultChecked className="block size-[13px] appearance-none rounded-[3px] border border-[#999] bg-linear-to-b from-white to-[#ddd]" />
                <Icon name="check" className="pointer-events-none absolute left-[2px] top-1 h-[9px] text-[#222]" />
              </span>
              Close
            </label>
          </div>
        </div>
      </div>

      <footer className="flex h-[55px] items-start justify-end rounded-b-md border-t border-[#ddd] bg-[#f4f4f4] pt-[10px] pr-[10px]">
        <button className="h-[34px] w-[76px] rounded-[4px] border border-[#ccc] bg-white pr-[6px]">Cancel</button>
        <div className="relative -ml-px">
          <button className="block h-[34px] w-[65px] rounded-[4px] border border-[#4a74b8] bg-[#5a8fc3] text-white">Select</button>
          <Highlight />
        </div>
      </footer>
    </section>
  );
}

export default function App() {
  return (
    <div className="flex min-h-screen flex-col" style={{ fontFamily: "'Liberation Sans', Arial, sans-serif" }}>
      <TopBar />
      <Ribbon />
      <main className="relative flex-1 overflow-hidden">
        <MapCanvas />
        <MapToolbar />
        <LayerPanel />
        <SourceBrowser />
      </main>
    </div>
  );
}
